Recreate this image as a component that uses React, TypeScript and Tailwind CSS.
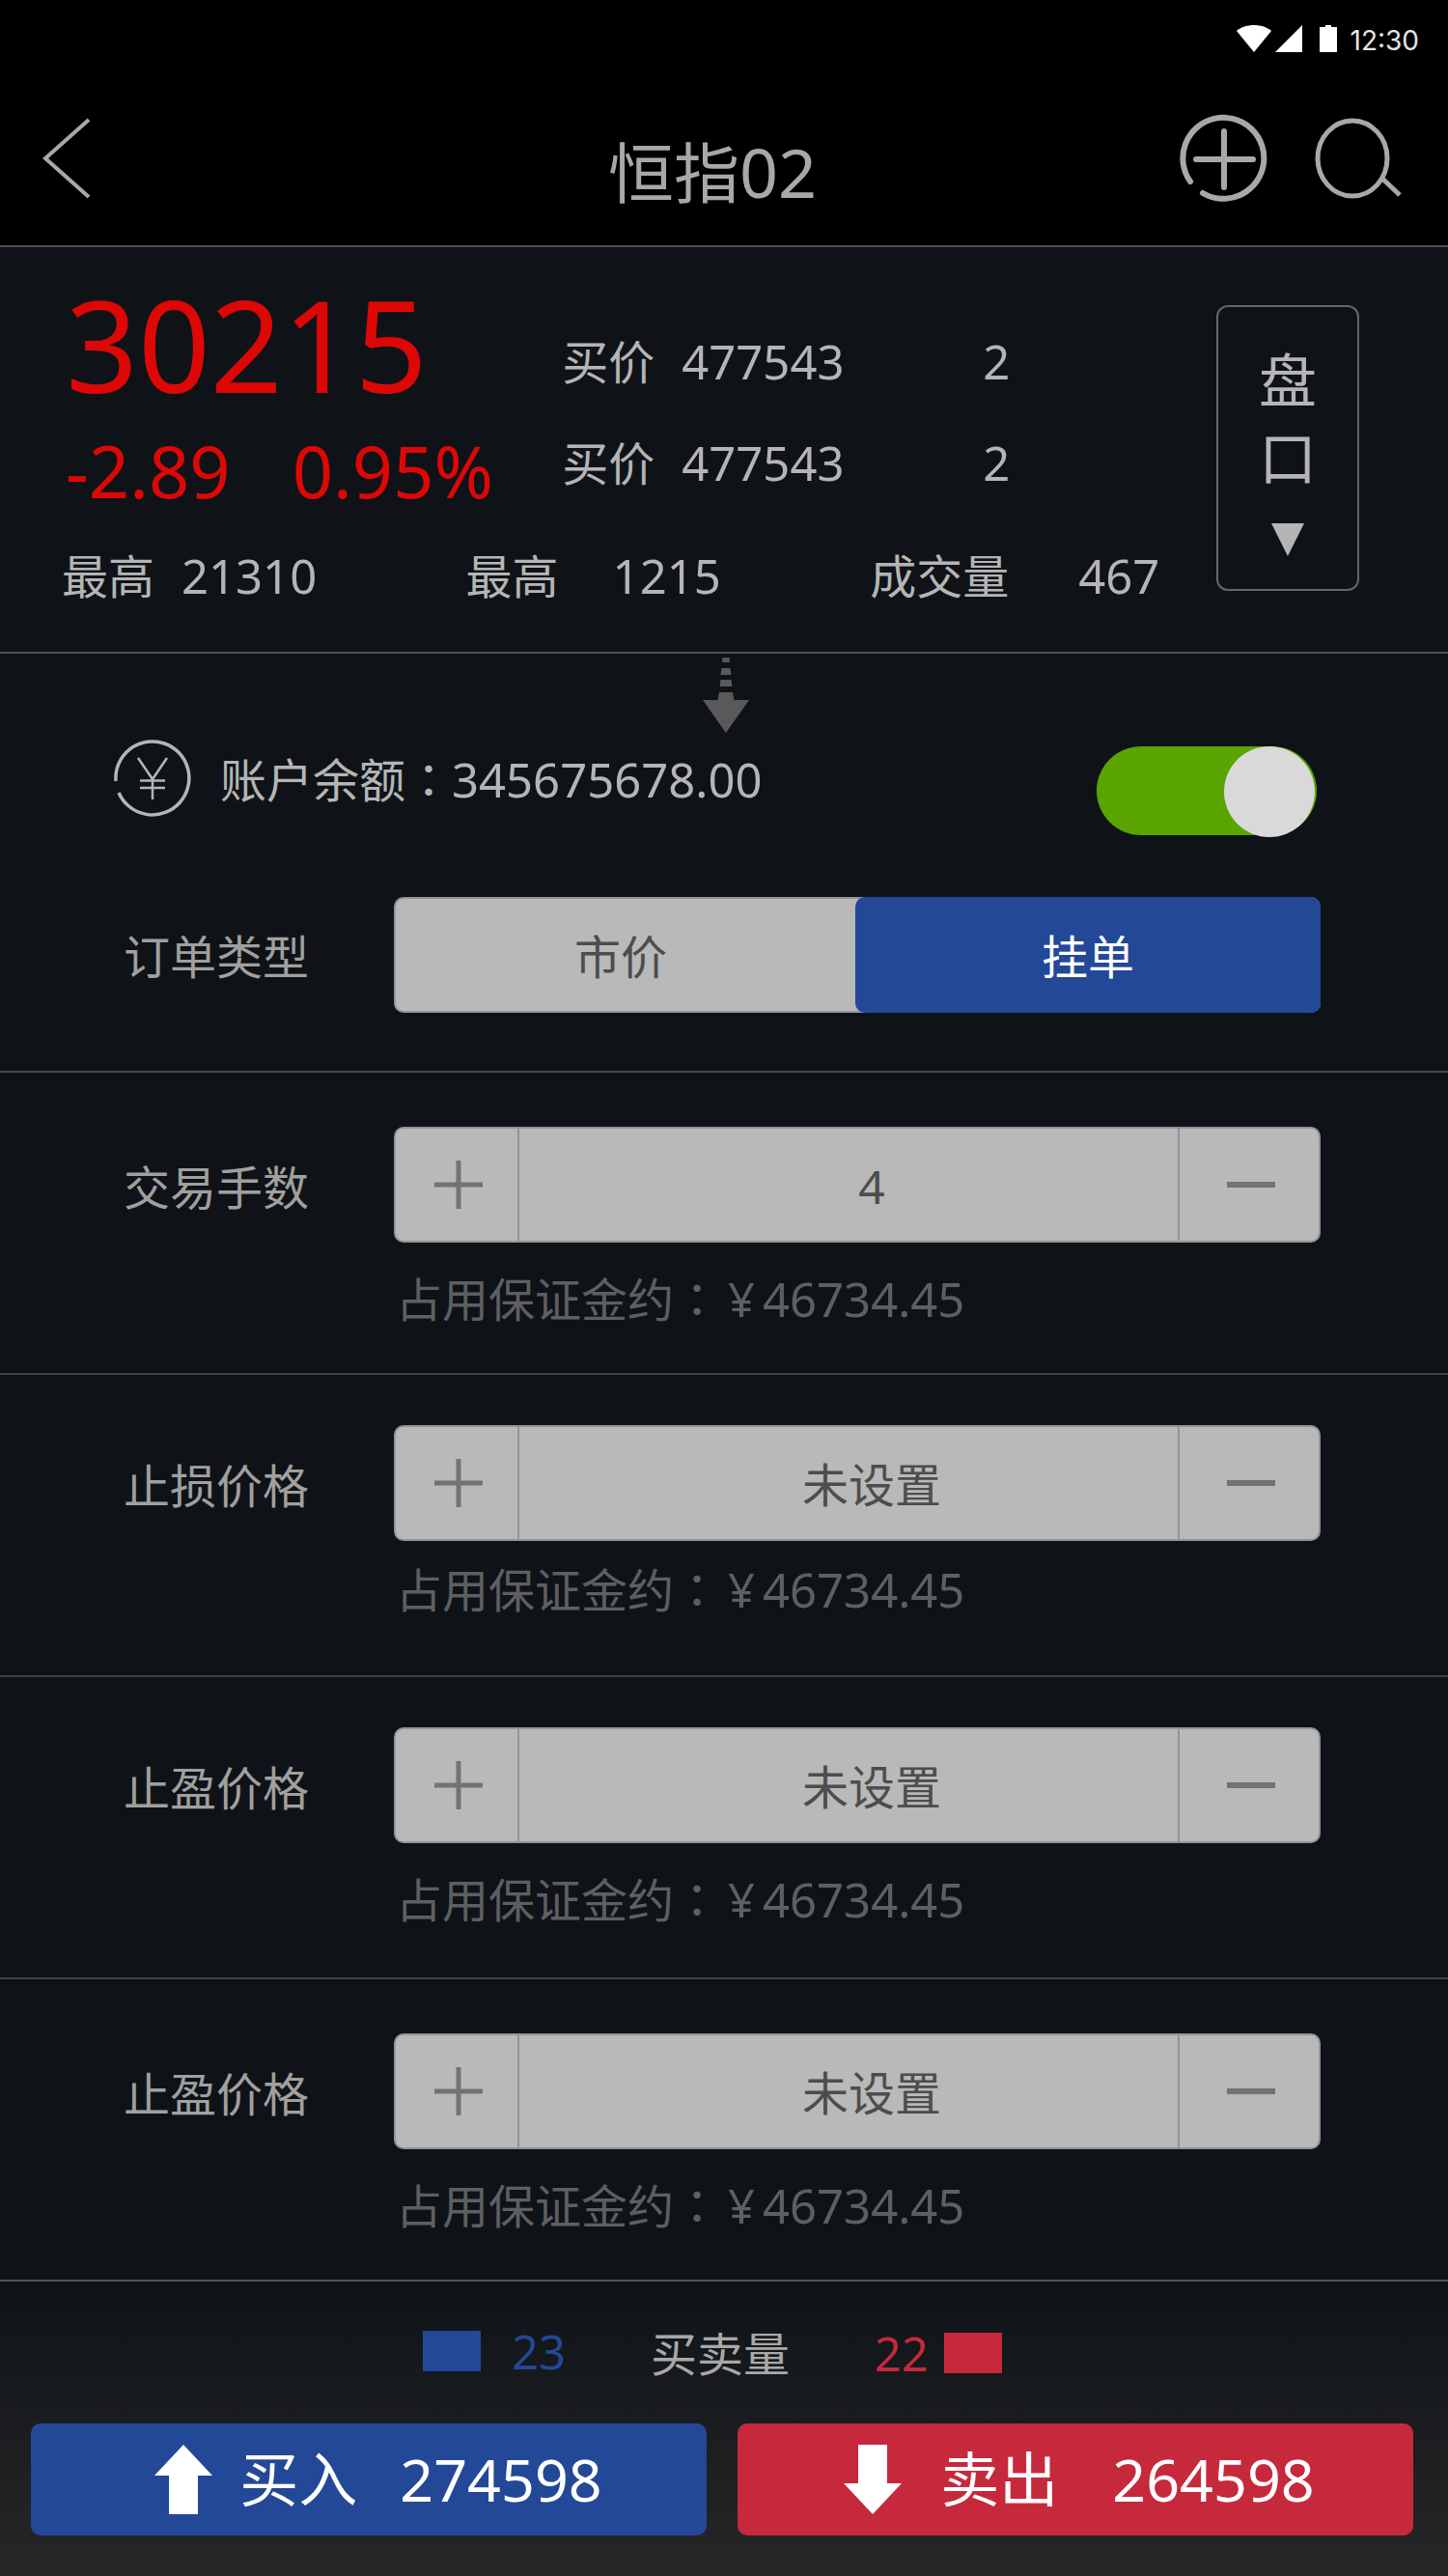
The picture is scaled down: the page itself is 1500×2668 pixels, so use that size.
import { useState } from 'react';
import clsx from 'clsx';

const stats = [
  { label: '最高', value: '21310', gap: 'gap-7' },
  { label: '最高', value: '1215', gap: 'gap-14' },
  { label: '成交量', value: '467', gap: 'gap-18' },
];

const quotes = [
  { label: '买价', price: '477543', volume: '2' },
  { label: '买价', price: '477543', volume: '2' },
];

const fields = [
  { id: 'lots', label: '交易手数', value: '4', pad: 'pt-14', noteGap: 'mt-7' },
  { id: 'stop-loss', label: '止损价格', value: '未设置', pad: 'pt-13', noteGap: 'mt-5' },
  { id: 'take-profit', label: '止盈价格', value: '未设置', pad: 'pt-13', noteGap: 'mt-7' },
  { id: 'take-profit-2', label: '止盈价格', value: '未设置', pad: 'pt-14', noteGap: 'mt-7' },
];

function StatusBar() {
  return (
    <div className="flex h-20 items-center justify-end pr-7.5 text-white">
      <svg width="104" height="28" viewBox="0 0 104 28" fill="currentColor" aria-hidden="true">
        <path d="M0 6C9-2 27-2 36 6L18 28Z" />
        <path d="M68 0V28H40Z" />
        <path d="M92 0h6v2h6v26H86V2h6Z" />
      </svg>
      <span className="ml-3.5 pt-1 font-['Inter',sans-serif] text-[28px] leading-8 text-[#e4e4e4]">12:30</span>
    </div>
  );
}

function Header() {
  return (
    <header className="border-b-2 border-[#4f4f4f] bg-black">
      <StatusBar />
      <div className="grid h-[174px] grid-cols-[1fr_auto_1fr] items-center pr-12 pb-1.5 pl-6 text-[#a8a8a8]">
        <button type="button" aria-label="返回" className="justify-self-start px-5">
          <svg width="50" height="84" viewBox="0 0 50 84" fill="none" stroke="currentColor" strokeWidth="4">
            <path d="M48 2L3 42L48 82" />
          </svg>
        </button>
        <h1 className="flex items-baseline pt-7 leading-[80px]">
          <span className="text-[68px]">恒指</span>
          <span className="text-[70px]">02</span>
        </h1>
        <div className="flex items-center gap-12 justify-self-end">
          <button type="button" aria-label="添加">
            <svg width="92" height="92" viewBox="0 0 92 92" fill="none" stroke="currentColor" strokeWidth="6" strokeLinecap="round">
              <path d="M11 70A42 42 0 1 1 24 82" />
              <path d="M46 18V76M17 47H76" />
            </svg>
          </button>
          <button type="button" aria-label="搜索">
            <svg width="90" height="84" viewBox="0 0 90 84" fill="none" stroke="currentColor" strokeWidth="5">
              <ellipse cx="39" cy="42" rx="36" ry="39" />
              <path d="M69 62L88 80" />
            </svg>
          </button>
        </div>
      </div>
    </header>
  );
}

function Quote() {
  return (
    <section className="flex border-b-2 border-[#4f4f4f] pt-8.5 pr-23 pb-12.5 pl-16 text-[#b5b5b5]">
      <div className="flex-1">
        <div className="grid grid-cols-[13fr_17fr]">
          <div className="pl-1 text-[#dd0806]">
            <div className="text-[131px] leading-[132px]">30215</div>
            <div className="mt-7.5 flex gap-16 text-[74px] leading-[72px]">
              <span>-2.89</span>
              <span>0.95%</span>
            </div>
          </div>
          <div className="flex flex-col gap-12 pt-14">
            {quotes.map((q, i) => (
              <div key={i} className="flex items-baseline text-[49px] leading-[56px]">
                <span className="mr-7 text-[48px]">{q.label}</span>
                <span className="w-[312px]">{q.price}</span>
                <span>{q.volume}</span>
              </div>
            ))}
          </div>
        </div>
        <div className="mt-11 grid grid-cols-[35fr_35fr_30fr]">
          {stats.map((s, i) => (
            <div key={i} className={clsx('flex items-baseline text-[49px] leading-[56px]', s.gap)}>
              <span className="text-[48px]">{s.label}</span>
              <span>{s.value}</span>
            </div>
          ))}
        </div>
      </div>
      <button
        type="button"
        className="mt-6.5 flex h-[296px] w-[148px] flex-col items-center rounded-xl border-2 border-[#666] pt-9 text-[60px] leading-[80px]"
      >
        <span>盘</span>
        <span>口</span>
        <svg className="mt-7" width="34" height="34" viewBox="0 0 34 34" fill="currentColor" aria-hidden="true">
          <path d="M0 0H34L17 34Z" />
        </svg>
      </button>
    </section>
  );
}

function Account() {
  const [enabled, setEnabled] = useState(true);
  const [type, setType] = useState('挂单');

  return (
    <section className="border-b-2 border-[#4a4648] pt-1 pb-15">
      <div className="flex justify-center pl-1">
        <svg width="48" height="78" viewBox="0 0 48 78" fill="#595959" aria-hidden="true">
          <path d="M20.5 0h7l.5 5h-8Z" />
          <path d="M19.5 11h9l1 7h-11Z" />
          <path d="M18.5 23h11l1 7h-13Z" />
          <path d="M17 36h14l1.500 8H48L24 78L0 44h15.500Z" />
        </svg>
      </div>

      <div className="mt-1 flex items-start pr-34 pl-29 text-[#b5b5b5]">
        <svg width="84" height="84" viewBox="0 0 84 84" fill="none" stroke="currentColor" aria-hidden="true">
          <path d="M4 46A38 38 0 1 1 7 58" strokeWidth="3.500" />
          <path d="M27 22L42 44L57 22M42 44V65M29 45.500H55M29 53H55" strokeWidth="2.500" />
        </svg>
        <label htmlFor="balance" className="ml-7 flex flex-1 items-baseline text-[49px] leading-[84px]">
          <span className="text-[48px]">账户余额</span>
          <span className="font-['Noto_Sans_CJK_TC',sans-serif] text-[48px]">：</span>
          <span>345675678.00</span>
        </label>
        <input
          id="balance"
          type="checkbox"
          role="switch"
          checked={enabled}
          onChange={(e) => setEnabled(e.target.checked)}
          className="mt-2.5 h-[92px] w-[228px] appearance-none rounded-full bg-[#555] pr-0.5 before:block before:size-[94px] before:rounded-full before:bg-[#d9d9d9] checked:bg-[#59a400] checked:before:ml-auto"
        />
      </div>

      <div className="mt-16 flex items-center pr-33 pl-32 text-[48px] leading-[56px]">
        <span id="order-type" className="w-[280px] pt-1 text-[#a0a09e]">
          订单类型
        </span>
        <div
          role="group"
          aria-labelledby="order-type"
          className="grid h-[120px] flex-1 grid-cols-2 rounded-[10px] border-2 border-[#929496] bg-[#b9b9b9]"
        >
          {['市价', '挂单'].map((name) => (
            <button
              key={name}
              type="button"
              aria-pressed={type === name}
              onClick={() => setType(name)}
              className={clsx('-m-0.5 rounded-[10px] pt-1', type === name ? 'bg-[#234897] text-white' : 'pr-3 text-[#4d4d4d]')}
            >
              {name}
            </button>
          ))}
        </div>
      </div>
    </section>
  );
}

function Field({ id, label, value, pad, noteGap }: (typeof fields)[number]) {
  const [text, setText] = useState(value);

  return (
    <section className={clsx('flex min-h-[313px] border-b-2 border-[#424242] pr-33 pl-32 last:border-[#525252]', pad)}>
      <label htmlFor={id} className="w-[280px] text-[48px] leading-[126px] text-[#a0a09e]">
        {label}
      </label>
      <div className="min-w-0 flex-1">
        <div className="flex h-[120px] overflow-hidden rounded-[10px] border-2 border-[#929496] bg-[#b9b9b9] text-[#737373]">
          <button type="button" aria-label="增加" className="flex w-32 items-center justify-center border-r-2 border-[#929496] pl-1">
            <svg width="50" height="50" viewBox="0 0 50 50" fill="none" stroke="currentColor" strokeWidth="5">
              <path d="M25 0V50M0 25H50" />
            </svg>
          </button>
          <input
            id={id}
            value={text}
            onChange={(e) => setText(e.target.value)}
            className="min-w-0 flex-1 pt-1 pl-12 text-center text-[48px] leading-[56px] text-[#4d4d4d] outline-none"
          />
          <button type="button" aria-label="减少" className="flex w-[146px] items-center justify-center border-l-2 border-[#929496] pl-1">
            <svg width="50" height="50" viewBox="0 0 50 50" fill="none" stroke="currentColor" strokeWidth="6">
              <path d="M0 25H50" />
            </svg>
          </button>
        </div>
        <p className={clsx('flex items-baseline pl-0.5 text-[49px] leading-[56px] text-[#5e5f61]', noteGap)}>
          <span className="text-[48px]">占用保证金约</span>
          <span className="font-['Noto_Sans_CJK_TC',sans-serif] text-[48px]">：</span>
          <span className="w-11 text-center">¥</span>
          <span>46734.45</span>
        </p>
      </div>
    </section>
  );
}

function TradeBar() {
  return (
    <footer className="bg-linear-to-b from-[#0f1318] to-[#272727] pt-11 pb-11">
      <div className="flex items-baseline justify-center gap-22 pr-6 text-[49px] leading-[56px]">
        <div className="flex items-center gap-8 text-[#234897]">
          <span className="h-[42px] w-15 bg-[#234897]" />
          <span>23</span>
        </div>
        <span className="text-[48px] text-[#a8a8a8]">买卖量</span>
        <div className="flex items-center gap-4 text-[#c6293b]">
          <span>22</span>
          <span className="h-[42px] w-15 bg-[#c6293b]" />
        </div>
      </div>
      <div className="mt-11 grid grid-cols-2 gap-8 pr-9 pl-8 text-[61px] leading-[80px] text-white">
        <button type="button" className="flex h-[116px] items-center justify-center rounded-[10px] bg-[#234897] pl-5">
          <svg width="60" height="72" viewBox="0 0 60 72" fill="currentColor" aria-hidden="true">
            <path d="M30 0L60 32H45V72H15V32H0Z" />
          </svg>
          <span className="ml-7">买入</span>
          <span className="ml-11">274598</span>
        </button>
        <button type="button" className="flex h-[116px] items-center justify-center rounded-[10px] bg-[#c6293b] pl-2">
          <svg width="60" height="72" viewBox="0 0 60 72" fill="currentColor" aria-hidden="true">
            <path d="M15 0H45V40H60L30 72L0 40H15Z" />
          </svg>
          <span className="ml-10">卖出</span>
          <span className="ml-14">264598</span>
        </button>
      </div>
    </footer>
  );
}

export default function App() {
  return (
    <div className="min-h-screen bg-[#0f1318] font-['Noto_Sans','Noto_Sans_CJK_SC',sans-serif]">
      <Header />
      <main>
        <Quote />
        <Account />
        <div>
          {fields.map((f) => (
            <Field key={f.id} {...f} />
          ))}
        </div>
      </main>
      <TradeBar />
    </div>
  );
}
